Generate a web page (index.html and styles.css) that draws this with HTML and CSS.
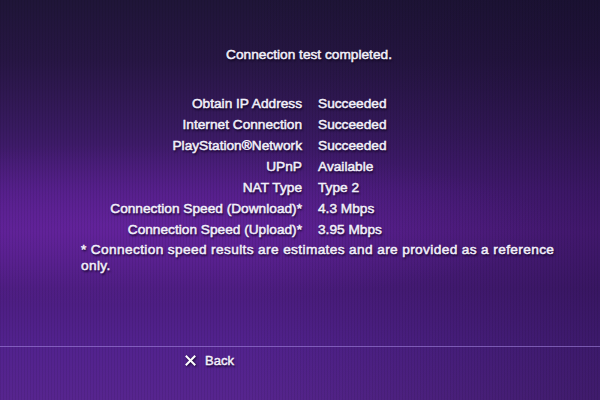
FILE: index.html
```html
<!DOCTYPE html>
<html lang="en">
<head>
<meta charset="utf-8">
<title>Connection test</title>
<link rel="stylesheet" href="styles.css">
</head>
<body>
<div class="screen">
  <main class="panel">
    <h1 class="title">Connection test completed.</h1>
    <dl class="results">
      <dt>Obtain IP Address</dt><dd>Succeeded</dd>
      <dt>Internet Connection</dt><dd>Succeeded</dd>
      <dt>PlayStation®Network</dt><dd>Succeeded</dd>
      <dt>UPnP</dt><dd>Available</dd>
      <dt>NAT Type</dt><dd>Type 2</dd>
      <dt>Connection Speed (Download)*</dt><dd>4.3 Mbps</dd>
      <dt>Connection Speed (Upload)*</dt><dd>3.95 Mbps</dd>
    </dl>
    <p class="note">* Connection speed results are estimates and are provided as a reference only.</p>
  </main>
  <footer class="bar">
    <span class="btn">
      <svg class="cross" width="11" height="11" viewBox="0 0 11 11" aria-hidden="true">
        <path d="M1.5 1.5 L9.5 9.5 M9.5 1.5 L1.5 9.5" stroke="#fff" stroke-width="2" stroke-linecap="square" fill="none"/>
      </svg>
      <span class="btn-label">Back</span>
    </span>
  </footer>
</div>
</body>
</html>
```

FILE: styles.css
```css
html, body {
  margin: 0;
  padding: 0;
}
body {
  width: 600px;
  height: 400px;
  overflow: hidden;
  font-family: "Liberation Sans", Arial, sans-serif;
  color: #f2f0fa;
}
.screen {
  width: 600px;
  height: 400px;
  display: flex;
  flex-direction: column;
  background:
    repeating-linear-gradient(to right, rgba(0,0,0,0.07) 0 1px, rgba(0,0,0,0) 1px 3px),
    radial-gradient(ellipse 440px 80px at 110px 225px, rgba(115,40,175,0.4), rgba(115,40,175,0) 100%),
    linear-gradient(to right, rgba(15,8,35,0) 0%, rgba(15,8,35,0) 40%, rgba(15,8,35,0.32) 100%),
    linear-gradient(to bottom, #1f1538 0%, #271644 15%, #381a60 32%, #4e1d82 48%, #581f8e 58%, #4c1d80 72%, #52228e 86%, #57258f 100%);
}
.panel {
  padding: 44px 0 0 81px;
  font-size: 13.7px;
  text-shadow: 1px 2px 2px rgba(10,0,25,0.85);
  -webkit-text-stroke: 0.5px #f2f0fa;
}
.title {
  margin: 0 0 28px 0;
  width: 456px;
  text-align: center;
  font-size: 13.7px;
  font-weight: normal;
  line-height: 21px;
}
.results {
  margin: 0;
  display: grid;
  grid-template-columns: 221px auto;
  column-gap: 16px;
  line-height: 21px;
}
.results dt {
  text-align: right;
  white-space: nowrap;
}
.results dd {
  margin: 0;
  white-space: nowrap;
}
.note {
  margin: 2px 0 0 0;
  width: 485px;
  line-height: 16px;
  letter-spacing: 0.36px;
}
.bar {
  margin-top: auto;
  height: 54px;
  border-top: 1px solid rgba(170,140,230,0.55);
  box-sizing: border-box;
  padding: 5px 0 0 185px;
}
.btn {
  display: inline-flex;
  align-items: center;
  gap: 9px;
  font-size: 13px;
  line-height: 16px;
  text-shadow: 1px 2px 2px rgba(10,0,25,0.85);
  -webkit-text-stroke: 0.45px #f2f0fa;
}
.cross {
  filter: drop-shadow(1px 1px 1px rgba(10,0,25,0.8));
}
```
